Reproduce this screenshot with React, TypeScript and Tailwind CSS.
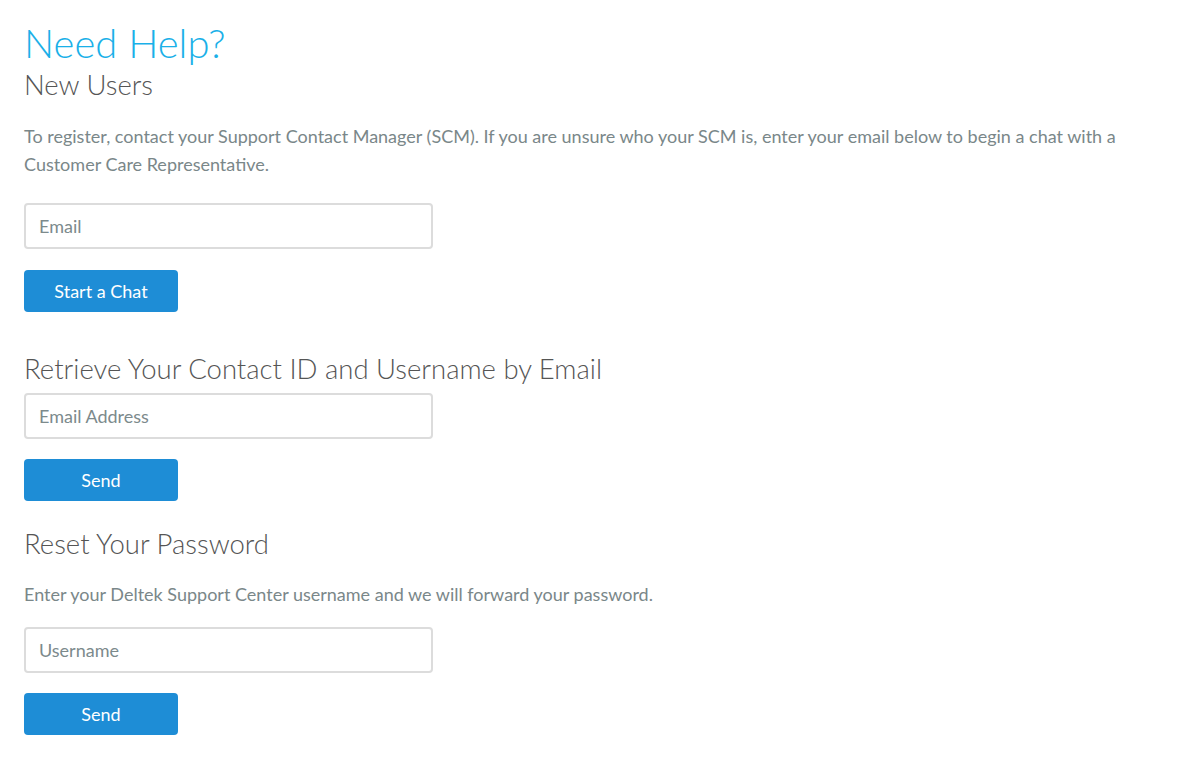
import React from 'react';

const body = { fontFamily: 'Lato, "Open Sans", sans-serif' };

function Field({ placeholder }: { placeholder: string }) {
  return (
    <input
      type="text"
      placeholder={placeholder}
      className="block w-[409px] h-[46px] rounded-[4px] border-2 border-[#dcdcdc] bg-white px-[13px] text-[18px] text-[#333] placeholder:text-[#7c8a8c] outline-none"
    />
  );
}

function Btn({ label }: { label: string }) {
  return (
    <button
      type="button"
      className="block w-[154px] h-[42px] rounded-[4px] bg-[#1e8dd6] text-white text-[18px]"
    >
      {label}
    </button>
  );
}

export default function App() {
  return (
    <div className="min-h-screen bg-white pl-6 pt-[19px]" style={body}>
      <h1 className="text-[40px] leading-[48px] font-light text-[#1ab0e8]">Need Help?</h1>
      <h2 className="text-[27.5px] leading-[36px] font-light text-[#555]">New Users</h2>
      <p className="mt-[19px] text-[18px] leading-[28px] text-[#7a8789] max-w-[1150px]">
        To register, contact your Support Contact Manager (SCM). If you are unsure who your SCM is, enter your email below to begin a chat with a Customer Care Representative.
      </p>
      <div className="mt-[25px]">
        <Field placeholder="Email" />
      </div>
      <div className="mt-[21px]">
        <Btn label="Start a Chat" />
      </div>

      <h2 className="mt-[39px] text-[27.5px] leading-[36px] font-light text-[#555]">
        Retrieve Your Contact ID and Username by Email
      </h2>
      <div className="mt-[6px]">
        <Field placeholder="Email Address" />
      </div>
      <div className="mt-[20px]">
        <Btn label="Send" />
      </div>

      <h2 className="mt-[25px] text-[27.5px] leading-[36px] font-light text-[#555]">Reset Your Password</h2>
      <p className="mt-[18px] text-[18px] leading-[28px] text-[#7a8789]">
        Enter your Deltek Support Center username and we will forward your password.
      </p>
      <div className="mt-[19px]">
        <Field placeholder="Username" />
      </div>
      <div className="mt-[20px]">
        <Btn label="Send" />
      </div>
    </div>
  );
}
